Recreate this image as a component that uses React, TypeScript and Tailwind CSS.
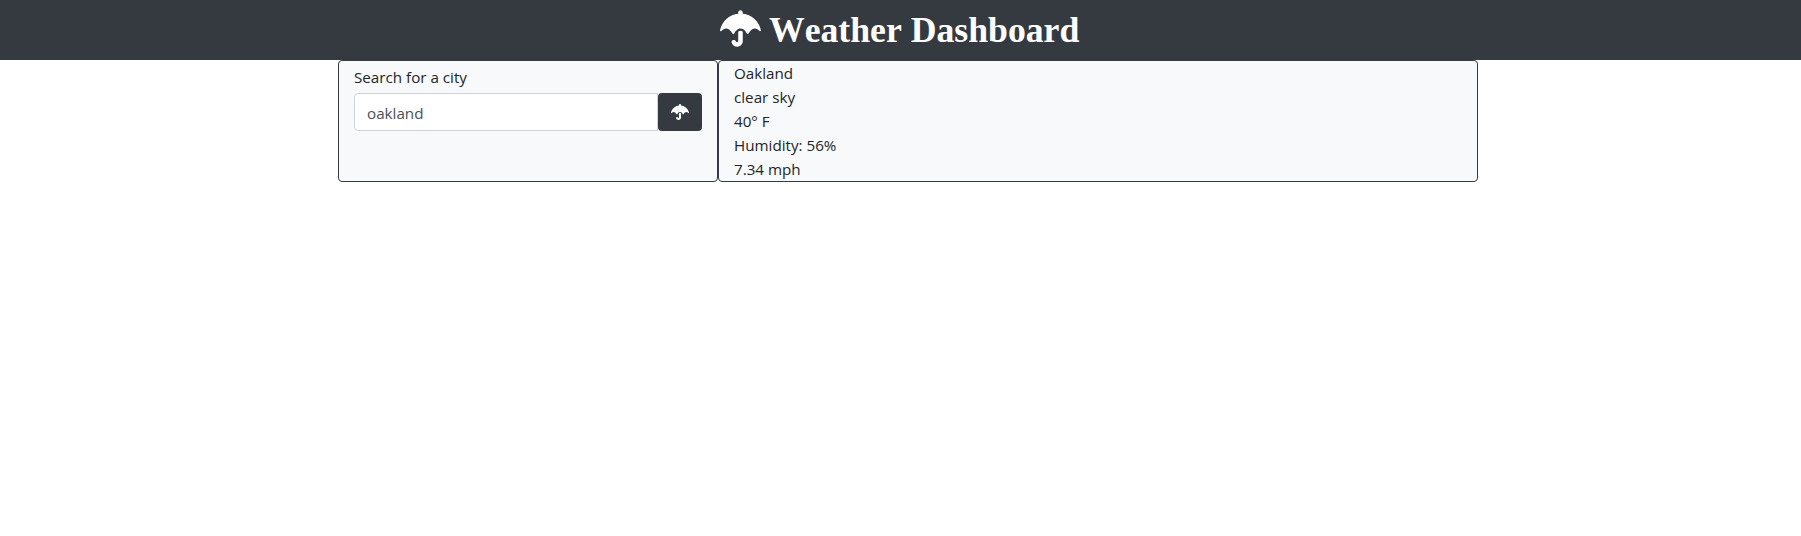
import { FaUmbrella } from "react-icons/fa";

const readings = ["Oakland", "clear sky", "40° F", "Humidity: 56%", "7.34 mph"];

export default function App() {
  return (
    <div className="min-h-[536px] bg-white font-['Open_Sans',sans-serif] text-[15.2px] leading-6 text-[#212529]">
      <header className="flex h-[60px] items-center bg-[#343a40] pl-[720px] text-white">
        <h1 className="flex items-center gap-2 whitespace-nowrap font-['Liberation_Serif',serif] text-[35.7px] font-bold [font-kerning:none]">
          <FaUmbrella className="mb-[3px] h-[37px] w-[41px]" />
          Weather Dashboard
        </h1>
      </header>
      <main className="ml-[338px] flex w-[1140px]">
        <section className="w-[380px] rounded border border-[#343a40] bg-[#f8f9fa] px-[15px] pt-1">
          <label htmlFor="city" className="mb-1 block">Search for a city</label>
          <div className="flex">
            <input id="city" defaultValue="oakland" className="h-[38px] min-w-0 flex-1 rounded-l border border-[#ced4da] bg-white px-3 pt-px text-[#495057]" />
            <button aria-label="Search" className="flex h-[38px] w-11 items-center justify-center rounded bg-[#343a40] text-white"><FaUmbrella className="h-4 w-[18px]" /></button>
          </div>
        </section>
        <section className="w-[760px] rounded border border-[#343a40] bg-[#f8f9fa] px-[15px]">
          {readings.map((r) => <p key={r}>{r}</p>)}
        </section>
      </main>
    </div>
  );
}
